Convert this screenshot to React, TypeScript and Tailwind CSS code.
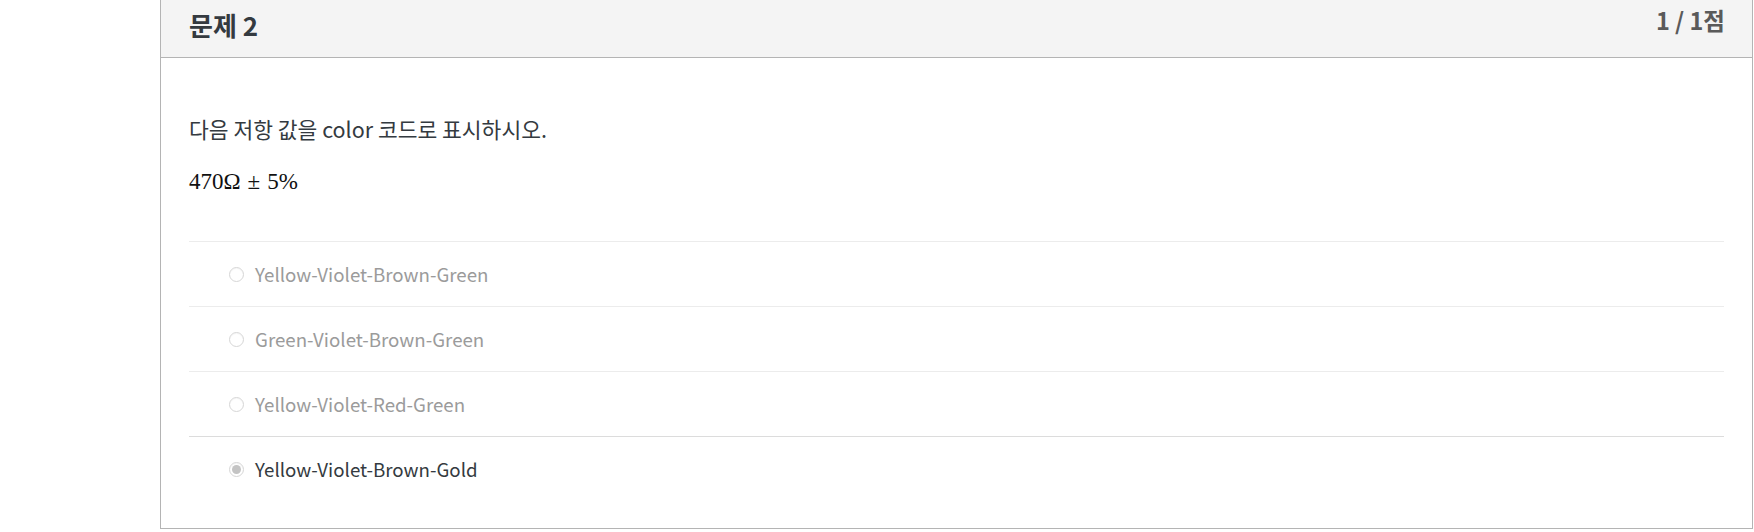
const options = [
  { label: "Yellow-Violet-Brown-Green", checked: false },
  { label: "Green-Violet-Brown-Green", checked: false },
  { label: "Yellow-Violet-Red-Green", checked: false },
  { label: "Yellow-Violet-Brown-Gold", checked: true },
];

function Radio({ checked }: { checked: boolean }) {
  return (
    <span className="flex h-[15px] w-[15px] shrink-0 items-center justify-center rounded-full border border-[#d6d6d6] bg-white shadow-[inset_0_1px_1px_rgba(0,0,0,0.04)]">
      {checked && <span className="h-[9px] w-[9px] rounded-full bg-[#c4c4c4]" />}
    </span>
  );
}

export default function App() {
  return (
    <div
      className="h-[532px] w-[1754px] bg-white pl-[160px]"
      style={{ fontFamily: '"Noto Sans CJK KR", "Noto Sans", sans-serif' }}
    >
      <div className="w-[1593px] border-x border-b border-[#b4b4b4] bg-white">
        {/* header */}
        <div className="flex h-[58px] items-start justify-between border-b border-[#b4b4b4] bg-[#f4f4f4] pl-[28px] pr-[27px] pt-[6px]">
          <h3 className="text-[26px] font-bold leading-[38px] text-[#343a40]">문제 2</h3>
          <span className="text-[23.5px] font-bold leading-[28px] text-[#5a5a5a]">1 / 1점</span>
        </div>

        {/* body */}
        <div className="px-[28px] pb-[27px] pt-[56px]">
          <p className="text-[21.5px] leading-[30px] text-[#343a40]">다음 저항 값을 color 코드로 표시하시오.</p>
          <p
            className="mt-[23px] text-[23px] leading-[30px] text-[#111]"
            style={{ fontFamily: '"Liberation Serif", "DejaVu Serif", serif' }}
          >
            470Ω<span className="mx-[7px]">±</span>5%
          </p>

          <ul className="mt-[44px]">
            {options.map((o) => (
              <li
                key={o.label}
                className={`flex h-[65px] items-center gap-[11px] border-t pl-[40px] ${
                  o.checked ? "border-[#dcdcdc]" : "border-[#ececec]"
                }`}
              >
                <Radio checked={o.checked} />
                <span className={`text-[18.7px] leading-[30px] ${o.checked ? "text-[#343a40]" : "text-[#9b9b9b]"}`}>
                  {o.label}
                </span>
              </li>
            ))}
          </ul>
        </div>
      </div>
    </div>
  );
}
